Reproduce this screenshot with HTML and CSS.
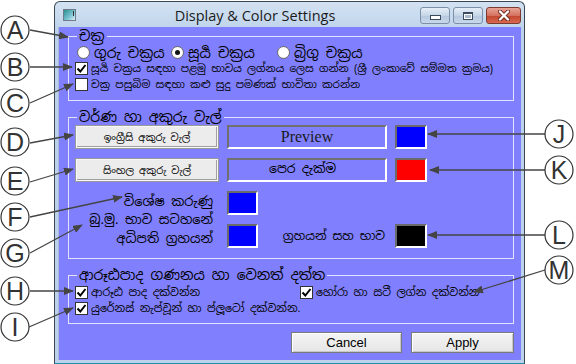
FILE: index.html
```html
<!DOCTYPE html>
<html lang="si">
<head>
    <meta charset="UTF-8">
    <title>Display &amp; Color Settings</title>
    <link rel="stylesheet" href="styles.css">
</head>
<body>
<div class="screen">
    <div class="window">
        <div class="titlebar">
            <span class="app-icon"><i></i></span>
            <span class="title">Display &amp; Color Settings</span>
            <div class="caption-buttons">
                <span class="cap-btn min"><i></i></span>
                <span class="cap-btn max"><i></i></span>
                <span class="cap-btn close">
                    <svg width="14" height="11" viewBox="0 0 14 11"><path d="M3 1.5 L11 9.5 M11 1.5 L3 9.5" stroke="#6b2a20" stroke-width="4" stroke-linecap="round"/><path d="M3 1.5 L11 9.5 M11 1.5 L3 9.5" stroke="#fff" stroke-width="2.4" stroke-linecap="round"/></svg>
                </span>
            </div>
        </div>

        <div class="client">
            <!-- chart type -->
            <fieldset class="group chart-group">
                <legend>චක්‍ර</legend>
                <div class="radio-row">
                    <label class="radio r1"><span class="dot"></span>ගුරු චක්‍රය</label>
                    <label class="radio r2"><span class="dot on"></span>සූර්‍ය චක්‍රය</label>
                    <label class="radio r3"><span class="dot"></span>බ්‍රිගු චක්‍රය</label>
                </div>
                <label class="check small">
                    <span class="box"><svg viewBox="0 0 11 11"><path d="M1.5 5.5 L4.3 8.5 L9.5 2" fill="none" stroke="#000" stroke-width="2"/></svg></span>
                    සූර්‍ය චක්‍රය සඳහා පළමු භාවය ලග්නය ලෙස ගන්න (ශ්‍රී ලංකාවේ සම්මත ක්‍රමය)
                </label>
                <label class="check small">
                    <span class="box"></span>
                    චක්‍ර පසුබිම සඳහා කළු සුදු පමණක් භාවිතා කරන්න
                </label>
            </fieldset>

            <!-- colours and fonts -->
            <fieldset class="group colour-group">
                <legend>වර්ණ හා අකුරු වැල්</legend>
                <div class="colour-grid">
                    <button class="font-btn">ඉංග්‍රීසි අකුරු වැල්</button>
                    <div class="preview latin">Preview</div>
                    <span class="swatch blue"></span>

                    <button class="font-btn">සිංහල අකුරු වැල්</button>
                    <div class="preview sin">පෙර දැක්ම</div>
                    <span class="swatch red"></span>

                    <div class="row-label">විශේෂ කරුණු</div>
                    <div class="cell"><span class="swatch blue"></span></div>
                    <span></span>

                    <div class="row-label two-line">බු.මු. භාව සටහනේ<br>අධිපති ග්‍රහයන්</div>
                    <div class="cell">
                        <span class="swatch blue"></span>
                        <span class="inline-label">ග්‍රහයන් සහ භාව</span>
                    </div>
                    <span class="swatch black"></span>
                </div>
            </fieldset>

            <!-- arudha and other data -->
            <fieldset class="group data-group">
                <legend>ආරූඪපාද ගණනය හා වෙනත් දත්ත</legend>
                <div class="check-grid">
                    <label class="check">
                        <span class="box"><svg viewBox="0 0 11 11"><path d="M1.5 5.5 L4.3 8.5 L9.5 2" fill="none" stroke="#000" stroke-width="2"/></svg></span>
                        ආරූඪ පාද දක්වන්න
                    </label>
                    <label class="check">
                        <span class="box"><svg viewBox="0 0 11 11"><path d="M1.5 5.5 L4.3 8.5 L9.5 2" fill="none" stroke="#000" stroke-width="2"/></svg></span>
                        හෝරා හා සටී ලග්න දක්වන්න
                    </label>
                    <label class="check wide">
                        <span class="box"><svg viewBox="0 0 11 11"><path d="M1.5 5.5 L4.3 8.5 L9.5 2" fill="none" stroke="#000" stroke-width="2"/></svg></span>
                        යුරේනස් නැප්චූන් හා ප්ලූටෝ දක්වන්න.
                    </label>
                </div>
            </fieldset>

            <div class="actions">
                <button class="dlg-btn cancel">Cancel</button>
                <button class="dlg-btn apply">Apply</button>
            </div>
        </div>
    </div>

    <!-- callouts -->
    <svg class="callouts" width="576" height="364" viewBox="0 0 576 364">
        <defs>
            <marker id="head" viewBox="0 0 10 8" refX="9" refY="4" markerWidth="10" markerHeight="8" markerUnits="userSpaceOnUse" orient="auto">
                <path d="M0 0 L10 4 L0 8 Z" fill="#444"/>
            </marker>
        </defs>
        <g class="arrows">
            <line x1="30" y1="30" x2="68" y2="37"/>
            <line x1="30" y1="67" x2="72" y2="67"/>
            <line x1="30" y1="103" x2="73" y2="84"/>
            <line x1="30" y1="143" x2="73" y2="135"/>
            <line x1="30" y1="182" x2="73" y2="169"/>
            <line x1="30" y1="217" x2="122" y2="197"/>
            <line x1="30" y1="253" x2="82" y2="225"/>
            <line x1="30" y1="291" x2="73" y2="291"/>
            <line x1="29" y1="327" x2="73" y2="308"/>
            <line x1="545" y1="134" x2="428" y2="134"/>
            <line x1="545" y1="170" x2="430" y2="170"/>
            <line x1="545" y1="235" x2="428" y2="235"/>
            <line x1="545" y1="270" x2="474" y2="292"/>
        </g>
        <g class="bubbles">
            <circle cx="15" cy="30" r="14"/><text x="15" y="39">A</text>
            <circle cx="15" cy="67" r="14"/><text x="15" y="76">B</text>
            <circle cx="15" cy="103" r="14"/><text x="15" y="112">C</text>
            <circle cx="15" cy="142" r="14"/><text x="15" y="151">D</text>
            <circle cx="15" cy="181" r="14"/><text x="15" y="190">E</text>
            <circle cx="15" cy="217" r="14"/><text x="15" y="226">F</text>
            <circle cx="15" cy="253" r="14"/><text x="15" y="262">G</text>
            <circle cx="15" cy="291" r="14"/><text x="15" y="300">H</text>
            <circle cx="15" cy="327" r="14"/><text x="15" y="336">I</text>
            <circle cx="559" cy="134" r="14"/><text x="559" y="143">J</text>
            <circle cx="559" cy="170" r="14"/><text x="559" y="179">K</text>
            <circle cx="559" cy="235" r="14"/><text x="559" y="244">L</text>
            <circle cx="559" cy="270" r="14"/><text x="559" y="279">M</text>
        </g>
    </svg>
</div>
</body>
</html>
```

FILE: styles.css
```css
/* page */
body {
    margin: 0;
    background: #ffffff;
    font-family: "Noto Sans Sinhala", "Noto Serif Sinhala", "Iskoola Pota", "LKLUG", "DejaVu Sans", sans-serif;
    font-weight: 400;
    color: #000;
}

.screen {
    position: relative;
    width: 576px;
    height: 364px;
    padding: 1px 0 0 54px;
    box-sizing: border-box;
    overflow: hidden;
}

/* window frame */
.window {
    width: 471px;
    height: 363px;
    box-sizing: border-box;
    border: 1px solid #3a4652;
    border-bottom-color: #1c8fa6;
    border-radius: 6px 6px 0 0;
    background: linear-gradient(#d3e2f2, #bcd2ea 30px, #bcd2ea);
    padding: 0 3px 3px 3px;
    display: flex;
    flex-direction: column;
}

.titlebar {
    height: 25px;
    display: flex;
    align-items: center;
    flex: none;
}

.app-icon {
    width: 11px;
    height: 10px;
    margin: 1px 0 0 5px;
    border: 1px solid #6d7c88;
    background: linear-gradient(135deg, #2b8f8a, #7fc6d8 60%, #e4eef4);
    position: relative;
}

.app-icon i {
    position: absolute;
    right: 1px;
    top: 1px;
    width: 1px;
    height: 5px;
    background: #333;
}

.title {
    flex: 1;
    text-align: center;
    font-family: "Open Sans", "Noto Sans", sans-serif;
    font-size: 14.5px;
    color: #1b1b1b;
    padding-left: 14px;
    margin-top: 1px;
}

.caption-buttons {
    display: flex;
    gap: 3px;
    align-self: flex-start;
    margin-top: 5px;
}

.cap-btn {
    width: 30px;
    height: 17px;
    border: 1px solid #7b8fa6;
    border-radius: 3px;
    background: linear-gradient(#e6eef7, #c6d6e8 50%, #b3c7de 51%, #c9d9ea);
    display: flex;
    align-items: center;
    justify-content: center;
    box-sizing: border-box;
}

.cap-btn.min i {
    width: 9px;
    height: 3px;
    border: 1px solid #3b4a5c;
    background: #fff;
    margin-top: 4px;
}

.cap-btn.max i {
    width: 8px;
    height: 5px;
    border: 1px solid #3b4a5c;
    border-top-width: 2px;
    background: #aab9cb;
    box-shadow: 0 0 0 1px #fff inset;
}

.cap-btn.close {
    width: 35px;
    border-color: #7d3a30;
    background: linear-gradient(#e9a395, #d4725f 50%, #c2452d 51%, #d7684f);
}

.cap-btn.close svg {
    display: block;
}

/* client area */
.client {
    flex: 1;
    background: #8080ff;
    padding: 0 7px 0 9px;
    border-left: 1px solid #a8b8d8;
}

.group {
    margin: 0;
    padding: 0 0 8px 6px;
    border: 1px solid #e2e2ff;
    min-width: 0;
}

.group legend {
    padding: 0 2px;
    margin-left: 2px;
    line-height: 18px;
    font-size: 14px;
}

.radio-row {
    display: flex;
    height: 15px;
    align-items: center;
    font-size: 14px;
    padding-left: 2px;
}

.radio {
    display: flex;
    align-items: center;
    gap: 4px;
    white-space: nowrap;
}

.radio.r1 { width: 94px; }
.radio.r2 { width: 106px; }

.dot {
    width: 11px;
    height: 11px;
    border: 1px solid #6b6b6b;
    border-radius: 50%;
    background: radial-gradient(#ffffff 50%, #e8e8e8);
    display: flex;
    align-items: center;
    justify-content: center;
}

.dot.on::after {
    content: '';
    width: 5px;
    height: 5px;
    border-radius: 50%;
    background: #111;
}

.check {
    display: flex;
    align-items: center;
    gap: 3px;
    height: 16px;
    font-size: 11px;
    white-space: nowrap;
}

.check.small {
    font-size: 10.5px;
}

.box {
    width: 11px;
    height: 11px;
    border: 1px solid #333;
    background: #fff;
    flex: none;
}

.box svg {
    display: block;
    width: 11px;
    height: 11px;
}

/* colours group */
.colour-group {
    margin-top: 7px;
    padding-bottom: 10px;
}

.colour-grid {
    display: grid;
    grid-template-columns: 144px 160px 32px;
    grid-template-rows: 24px 24px 24px 24px;
    column-gap: 8px;
    row-gap: 9px;
    margin-top: -1px;
}

.font-btn {
    font-family: inherit;
    font-size: 10px;
    padding: 0;
    background: #ececec;
    border: 2px solid #f8f8f8;
    outline: 1px solid #9a9a9a;
    outline-offset: -1px;
    box-shadow: inset -1px -1px 0 #a0a0a0;
    color: #000;
}

.preview {
    border: 2px solid;
    border-color: #707070 #ffffff #ffffff #707070;
    display: flex;
    align-items: center;
    justify-content: center;
}

.preview.latin {
    font-family: "Liberation Serif", "Times New Roman", serif;
    font-weight: 400;
    font-size: 16px;
    color: #1a1a1a;
}

.preview.sin {
    font-size: 12.5px;
    justify-content: flex-start;
    padding-left: 40px;
    align-items: flex-start;
}

.swatch {
    width: 32px;
    height: 24px;
    box-sizing: border-box;
    border: 2px solid;
    border-color: #6a6a6a #ffffff #ffffff #6a6a6a;
    display: block;
}

.swatch.blue { background: #0000ff; }
.swatch.red { background: #ff0000; }
.swatch.black { background: #000000; }

.cell .swatch {
    width: 31px;
}

.row-label {
    text-align: right;
    font-size: 13px;
    line-height: 22px;
    padding-right: 6px;
    white-space: nowrap;
}

.row-label.two-line {
    line-height: 19px;
    height: 38px;
    margin-top: -14px;
    align-self: end;
}

.cell {
    display: flex;
    align-items: center;
    justify-content: space-between;
}

.inline-label {
    font-size: 12px;
    padding-right: 2px;
    white-space: nowrap;
}

/* data group */
.data-group {
    margin-top: 7px;
    padding-bottom: 7px;
}

.data-group legend {
    font-size: 14px;
}

.check-grid {
    display: grid;
    grid-template-columns: 225px 1fr;
}

.check.wide {
    grid-column: 1 / 3;
}

/* dialog buttons */
.actions {
    display: flex;
    justify-content: flex-end;
    gap: 9px;
    margin-top: 8px;
}

.dlg-btn {
    height: 21px;
    font-family: "Liberation Sans", Arial, sans-serif;
    font-size: 13px;
    color: #000;
    background: linear-gradient(#f4f4f4, #e6e6e6);
    border: 1px solid #7a7a7a;
    box-shadow: inset 1px 1px 0 #fff, inset -1px -1px 0 #c8c8c8;
    padding: 0;
}

.dlg-btn.cancel { width: 111px; }
.dlg-btn.apply { width: 103px; }

/* callouts drawn on top */
.callouts {
    position: absolute;
    left: 0;
    top: 0;
    pointer-events: none;
}

.arrows line {
    stroke: #444;
    stroke-width: 1.3;
    marker-end: url(#head);
}

.bubbles circle {
    fill: #fff;
    stroke: #333;
    stroke-width: 1.2;
}

.bubbles text {
    font-family: "Liberation Sans", Arial, sans-serif;
    font-size: 25px;
    fill: #333;
    text-anchor: middle;
}
```
